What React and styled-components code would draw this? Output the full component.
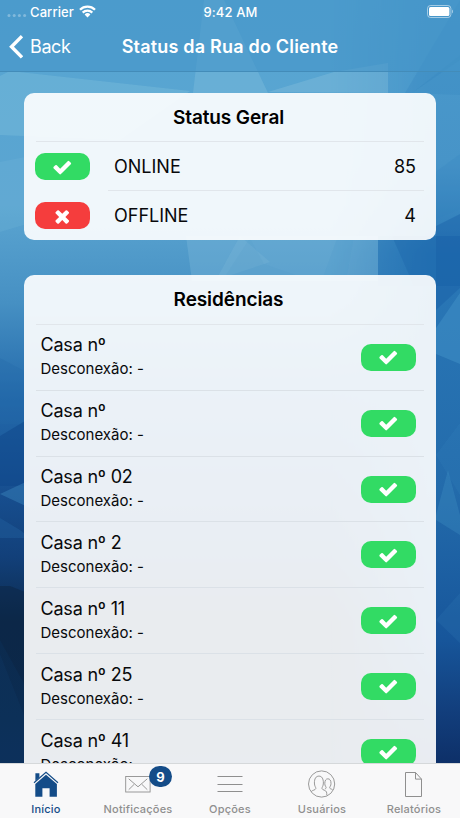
import styled, { createGlobalStyle } from "styled-components";
import React, { useState } from "react";

const houses = ["", "", "02", "2", "11", "25", "41"];

const tabs = [
  { id: "inicio", label: "Início", Icon: HomeIcon },
  { id: "notificacoes", label: "Notificações", Icon: MailIcon, badge: 9 },
  { id: "opcoes", label: "Opções", Icon: MenuIcon },
  { id: "usuarios", label: "Usuários", Icon: UsersIcon },
  { id: "relatorios", label: "Relatórios", Icon: FileIcon },
];

export default function App() {
  const [activeTab, setActiveTab] = useState("inicio");

  return (
    <Screen>
      <GlobalStyle />
      <Wallpaper />
      <Header>
        <StatusBar>
          <Carrier>
            <SignalDots />
            <CarrierName>Carrier</CarrierName>
            <WifiIcon />
          </Carrier>
          <Clock>9:42 AM</Clock>
          <BatteryIcon />
        </StatusBar>
        <NavBar>
          <BackButton>
            <BackIcon />
            <span>Back</span>
          </BackButton>
          <NavTitle>Status da Rua do Cliente</NavTitle>
        </NavBar>
      </Header>
      <Content>
        <Card>
          <CardTitle>Status Geral</CardTitle>
          <SummaryRow>
            <StatusPill online />
            <SummaryText $divider>
              <span>ONLINE</span>
              <span>85</span>
            </SummaryText>
          </SummaryRow>
          <SummaryRow>
            <StatusPill />
            <SummaryText>
              <span>OFFLINE</span>
              <span>4</span>
            </SummaryText>
          </SummaryRow>
        </Card>
        <Card>
          <CardTitle>Residências</CardTitle>
          {houses.map((house, index) => (
            <HouseRow key={index}>
              <div>
                <HouseName>Casa nº {house}</HouseName>
                <HouseInfo>Desconexão: -</HouseInfo>
              </div>
              <StatusPill online />
            </HouseRow>
          ))}
        </Card>
      </Content>
      <TabBar>
        {tabs.map(({ id, label, Icon, badge }) => (
          <Tab key={id} $active={activeTab === id} onClick={() => setActiveTab(id)}>
            <TabIcon>
              <Icon />
              {badge && <Badge>{badge}</Badge>}
            </TabIcon>
            <TabLabel>{label}</TabLabel>
          </Tab>
        ))}
      </TabBar>
    </Screen>
  );
}

function StatusPill({ online }) {
  return (
    <Pill $online={online}>
      <svg width="20.5" height="20.5" viewBox="0 0 1792 1792" fill="#fff">
        {online ? (
          <path d="M1671 566q0 40-28 68l-724 724-136 136q-28 28-68 28t-68-28l-136-136-362-362q-28-28-28-68t28-68l136-136q28-28 68-28t68 28l294 295 656-657q28-28 68-28t68 28l136 136q28 28 28 68z" />
        ) : (
          <path d="M1490 1322q0 40-28 68l-136 136q-28 28-68 28t-68-28l-294-294-294 294q-28 28-68 28t-68-28l-136-136q-28-28-28-68t28-68l294-294-294-294q-28-28-28-68t28-68l136-136q28-28 68-28t68 28l294 294 294-294q28-28 68-28t68 28l136 136q28 28 28 68t-28 68l-294 294 294 294q28 28 28 68z" />
        )}
      </svg>
    </Pill>
  );
}

function SignalDots() {
  return (
    <svg width="20" height="14" viewBox="0 0 20 14" fill="#fff" opacity="0.3">
      <circle cx="2" cy="8.500" r="1.500" />
      <circle cx="7.200" cy="8.500" r="1.500" />
      <circle cx="12.400" cy="8.500" r="1.500" />
      <circle cx="17.600" cy="8.500" r="1.500" />
    </svg>
  );
}

function WifiIcon() {
  return (
    <svg width="17" height="13" viewBox="0 0 17 13" fill="none" stroke="#fff" strokeWidth="2.3">
      <path d="M1 4.700a10.600 10.600 0 0 1 15 0" />
      <path d="M3.700 7.600a6.800 6.800 0 0 1 9.600 0" />
      <path d="M8.500 12.400L5.600 9.500a4.100 4.100 0 0 1 5.800 0z" fill="#fff" stroke="none" />
    </svg>
  );
}

function BatteryIcon() {
  return (
    <svg width="27" height="13" viewBox="0 0 27 13">
      <rect x="0.5" y="0.5" width="23.4" height="12" rx="3" fill="none" stroke="#fff" strokeOpacity="0.5" />
      <rect x="2" y="2" width="20.4" height="9" rx="1.5" fill="#fff" />
      <path d="M25 4.600c1.400.5 1.400 3.400 0 3.900z" fill="#fff" fillOpacity="0.5" />
    </svg>
  );
}

function BackIcon() {
  return (
    <svg width="14" height="24" viewBox="0 0 14 24" fill="none" stroke="#fff" strokeWidth="3.4">
      <path d="M13 1.200L2.500 11.800 13 22.400" />
    </svg>
  );
}

function HomeIcon() {
  return (
    <svg width="28" height="28" viewBox="0 0 28 28" fill="currentColor">
      <path d="M3.400 3.200h4v4L3.400 11z" />
      <path d="M2 12.700L14 2.400l12 10.300" fill="none" stroke="currentColor" strokeWidth="1.200" />
      <path d="M3.300 13.900L14 4.800l10.900 9.100v12.800h-7.300v-8.400h-7.200v8.400H3.300z" />
    </svg>
  );
}

function MailIcon() {
  return (
    <svg width="28" height="28" viewBox="0 0 28 28" fill="none" stroke="currentColor" strokeWidth="0.9">
      <rect x="1.700" y="6.500" width="24.400" height="15.500" />
      <path d="M4.700 8.800l9.300 8 9.300-8M4.700 19.700l5.500-5.400M23.300 19.700l-5.500-5.400" />
    </svg>
  );
}

function MenuIcon() {
  return (
    <svg width="28" height="28" viewBox="0 0 28 28" stroke="currentColor">
      <path d="M1.500 6.500h25M1.500 14.500h25M1.500 21.500h25" />
    </svg>
  );
}

function UsersIcon() {
  return (
    <svg width="28" height="28" viewBox="0 0 28 28" fill="none" stroke="currentColor" strokeWidth="0.9">
      <circle cx="13.600" cy="14" r="13.100" />
      <path d="M3.200 21.600c1.100-1.500 4.200-1.400 4.600-3 .3-1.200-1.400-2.300-1.400-5.600 0-4.300 1.500-6.900 4.500-6.900s4.500 2.600 4.500 6.900c0 3.300-1.700 4.400-1.400 5.600.4 1.600 3.700 1.300 4.500 3.400.3.900.3 2 .3 3.400" />
      <path d="M16.900 18.900c1-.3 1.400-.7 1.200-1.500-.2-.9-1.300-1.500-1.300-3.900 0-3 1.100-4.700 3.100-4.700s3.100 1.700 3.100 4.700c0 2.400-1.100 3-1.300 3.900-.3 1.500 1.600 1.400 2.900 2.300" />
    </svg>
  );
}

function FileIcon() {
  return (
    <svg width="28" height="28" viewBox="0 0 28 28" fill="none" stroke="currentColor">
      <path d="M5.500 2.500h10l6 6.600v17.400h-16zM15.500 2.500v6.600h6" />
    </svg>
  );
}

function Wallpaper() {
  return (
    <Backdrop viewBox="0 0 460 818" preserveAspectRatio="none">
      <defs>
        <linearGradient id="sky" x1="0" y1="0" x2="0" y2="1">
          <stop offset="0" stopColor="#56a5d2" />
          <stop offset="0.25" stopColor="#5ba5d1" />
          <stop offset="0.37" stopColor="#4690c3" />
          <stop offset="0.49" stopColor="#2268aa" />
          <stop offset="0.6" stopColor="#174f90" />
          <stop offset="0.68" stopColor="#12407a" />
          <stop offset="0.76" stopColor="#0c2b4e" />
          <stop offset="0.88" stopColor="#0b2c52" />
          <stop offset="1" stopColor="#0c2c5c" />
        </linearGradient>
        <linearGradient id="edge" x1="0" y1="0" x2="0" y2="1">
          <stop offset="0" stopColor="#4a9acc" />
          <stop offset="0.2" stopColor="#4794c8" />
          <stop offset="0.31" stopColor="#2a78b7" />
          <stop offset="0.6" stopColor="#236bab" />
          <stop offset="0.78" stopColor="#17569b" />
          <stop offset="0.87" stopColor="#123e7c" />
          <stop offset="0.95" stopColor="#0c2c63" />
        </linearGradient>
        <linearGradient id="fade" x1="0" y1="0" x2="1" y2="0">
          <stop offset="0.72" stopColor="#fff" stopOpacity="0" />
          <stop offset="0.93" stopColor="#fff" />
        </linearGradient>
        <mask id="right">
          <rect width="460" height="818" fill="url(#fade)" />
        </mask>
      </defs>
      <rect width="460" height="818" fill="url(#sky)" />
      <rect width="460" height="818" fill="url(#edge)" mask="url(#right)" />
      <path d="M0 76L10 71 190 91 120 140 0 135z" fill="#7dc0dd" opacity="0.38" />
      <path d="M204 0h20l44 93h-75z" fill="#90c7e2" opacity="0.3" />
      <path d="M268 92l66-20 54-9v30z" fill="#a0d0e4" opacity="0.25" />
      <path d="M412 93l48-38v40z" fill="#1f78b8" opacity="0.15" />
      <path d="M405 93L460 0v60l-48 33z" fill="#2e80bd" opacity="0.25" />
      <path d="M0 162l40-8v66L0 232z" fill="#78b9db" opacity="0.22" />
      <path d="M186 236h192v45H192z" fill="#82bddb" opacity="0.34" />
      <path d="M240 236l30 26-54 18z" fill="#9bd0e4" opacity="0.14" />
      <path d="M250 238l14 26 40 14h-80z" fill="#4590c2" opacity="0.1" />
      <path d="M338 236l-16 44h24l8-44z" fill="#4e9dcc" opacity="0.25" />
      <path d="M378 236h82v50h-82z" fill="#1f6db1" opacity="0.35" />
      <path d="M392 236h68v50h-46z" fill="#1b65aa" opacity="0.35" />
      <path d="M430 176l30-22v55l-30 12z" fill="#3484bd" opacity="0.2" />
      <path d="M436 226l24-12v74l-24 22z" fill="#165da5" opacity="0.4" />
      <path d="M436 328l24-35v71l-24-10z" fill="#4192c8" opacity="0.5" />
      <path d="M436 455l24 40v-72z" fill="#3a8ac0" opacity="0.15" />
      <path d="M436 515l12-45 12 45v20l-24-15z" fill="#3f8ec4" opacity="0.35" />
      <path d="M436 620l24-27v50z" fill="#3076b5" opacity="0.25" />
      <path d="M0 358l30 16v50H0z" fill="#2369aa" opacity="0.3" />
      <path d="M0 436l30-18v68H0z" fill="#0e4589" opacity="0.5" />
      <path d="M0 494l30-14v28z" fill="#347cb5" opacity="0.55" />
      <path d="M0 518l20 12 10 8H0z" fill="#2567a6" opacity="0.35" />
      <path d="M0 586h10l20 8v100L0 640z" fill="#0b2341" opacity="0.5" />
      <path d="M0 654l30 76v34H0z" fill="#164272" opacity="0.2" />
    </Backdrop>
  );
}

const GlobalStyle = createGlobalStyle`
  * {
    box-sizing: border-box;
  }
  body {
    margin: 0;
    font-family: Inter, "Liberation Sans", sans-serif;
    color: #08090b;
  }
  button {
    padding: 0;
    border: none;
    background: none;
    font: inherit;
    cursor: pointer;
  }
`;
const Screen = styled.div`
  position: relative;
  display: flex;
  flex-direction: column;
  width: 460px;
  height: 818px;
  overflow: hidden;
`;
const Backdrop = styled.svg`
  position: absolute;
  inset: 0;
  width: 100%;
  height: 100%;
  z-index: -1;
`;
const Header = styled.header`
  height: 72px;
  flex: none;
  color: #fff;
  background: rgba(68, 148, 200, 0.6);
  border-bottom: 1px solid #438cb9;
`;
const StatusBar = styled.div`
  display: grid;
  grid-template-columns: 1fr auto 1fr;
  align-items: center;
  height: 23px;
  padding: 0 6px 0 7px;
  font-size: 13px;
  font-weight: 500;
  > :last-child {
    justify-self: end;
  }
`;
const Carrier = styled.div`
  display: flex;
  align-items: center;
  svg:first-child {
    margin-top: 4px;
  }
`;
const CarrierName = styled.span`
  margin: 0 5px 0 3px;
  letter-spacing: 0.1px;
`;
const Clock = styled.span`
  letter-spacing: 0.1px;
`;
const NavBar = styled.div`
  display: grid;
  grid-template-columns: 1fr auto 1fr;
  align-items: center;
  height: 47px;
  padding: 0 9px;
`;
const BackButton = styled.button`
  display: flex;
  align-items: center;
  gap: 7px;
  color: #fff;
  font-size: 18px;
  letter-spacing: -0.4px;
`;
const NavTitle = styled.h1`
  margin: 0;
  font-size: 18px;
  font-weight: 600;
  letter-spacing: 0.2px;
`;
const Content = styled.main`
  flex: 1;
  min-height: 0;
  display: flex;
  flex-direction: column;
  gap: 35px;
  padding: 21px 24px 0;
  overflow: hidden;
`;
const Card = styled.section`
  flex: none;
  border-radius: 10px;
  background: rgba(255, 255, 255, 0.91);
`;
const CardTitle = styled.h2`
  display: flex;
  align-items: center;
  justify-content: center;
  height: 49.3px;
  margin: 0 12px;
  padding-right: 3px;
  font-size: 19px;
  font-weight: 600;
  letter-spacing: -0.1px;
  color: #000;
  border-bottom: 1px solid #e1e6eb;
`;
const SummaryRow = styled.div`
  display: flex;
  align-items: center;
  gap: 18px;
  height: 49.1px;
  padding: 0 12px 0 11px;
`;
const SummaryText = styled.div`
  flex: 1;
  display: flex;
  align-items: center;
  justify-content: space-between;
  height: 100%;
  padding: 0 8px 0 6px;
  font-size: 18px;
  border-bottom: 1px solid ${(props) => (props.$divider ? "#e1e6eb" : "transparent")};
`;
const Pill = styled.span`
  flex: none;
  display: flex;
  align-items: center;
  justify-content: center;
  width: 55px;
  height: 27px;
  border-radius: 10px;
  background: ${(props) => (props.$online ? "#32db64" : "#f53d3d")};
`;
const HouseRow = styled.div`
  display: flex;
  align-items: center;
  justify-content: space-between;
  height: 65.9px;
  margin: 0 12px;
  padding: 0 8px 0 4.5px;
  border-bottom: 1px solid #dbe1e7;
`;
const HouseName = styled.div`
  font-size: 18px;
  line-height: 24px;
  letter-spacing: -0.2px;
`;
const HouseInfo = styled.div`
  font-size: 15px;
  line-height: 23.5px;
`;
const TabBar = styled.nav`
  flex: none;
  display: flex;
  height: 55px;
  background: #f8f8f9;
  border-top: 1px solid #d5d8da;
`;
const Tab = styled.button`
  flex: 1;
  display: flex;
  flex-direction: column;
  align-items: center;
  padding-top: 6px;
  color: ${(props) => (props.$active ? "#144c88" : "#8f8f8f")};
`;
const TabIcon = styled.span`
  position: relative;
  display: flex;
`;
const TabLabel = styled.span`
  margin-top: 4px;
  font-size: 11px;
  line-height: 14px;
  font-weight: 500;
  letter-spacing: 0.2px;
`;
const Badge = styled.span`
  position: absolute;
  top: -4px;
  left: 25px;
  display: flex;
  align-items: center;
  justify-content: center;
  width: 23px;
  height: 21px;
  border-radius: 11px;
  background: #144c88;
  color: #fff;
  font-size: 13px;
  font-weight: 700;
`;
